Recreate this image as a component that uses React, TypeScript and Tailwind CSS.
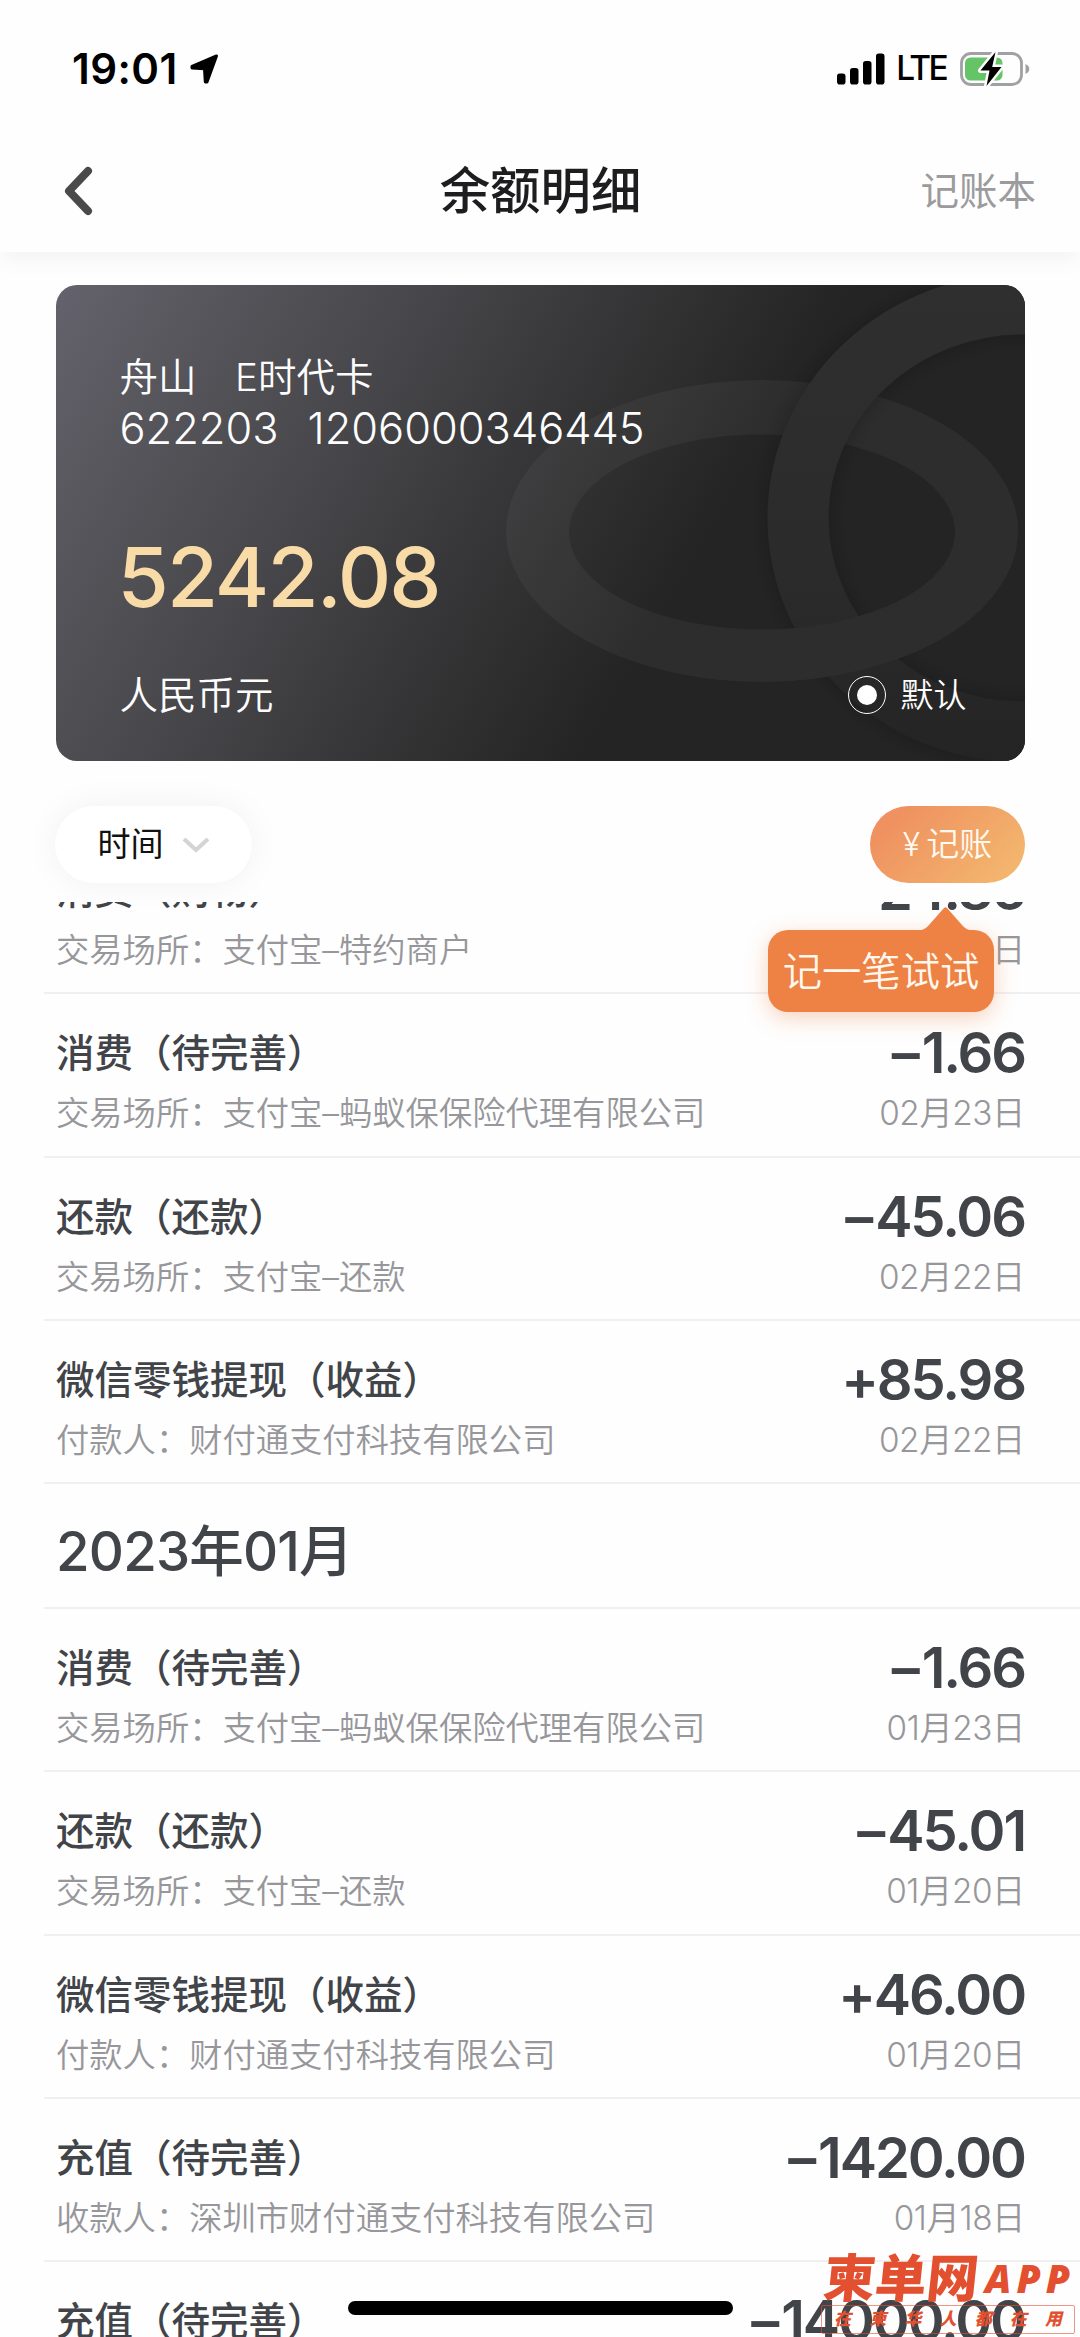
import React from 'react';
import { clsx } from 'clsx';

interface Transaction {
  title: string;
  detail: string;
  amount: string;
  date: string;
}

const FEBRUARY: Transaction[] = [
  { title: '消费（购物）', detail: '交易场所：支付宝–特约商户', amount: '–24.86', date: '02月23日' },
  { title: '消费（待完善）', detail: '交易场所：支付宝–蚂蚁保保险代理有限公司', amount: '–1.66', date: '02月23日' },
  { title: '还款（还款）', detail: '交易场所：支付宝–还款', amount: '–45.06', date: '02月22日' },
  { title: '微信零钱提现（收益）', detail: '付款人：财付通支付科技有限公司', amount: '+85.98', date: '02月22日' },
];

const JANUARY: Transaction[] = [
  { title: '消费（待完善）', detail: '交易场所：支付宝–蚂蚁保保险代理有限公司', amount: '–1.66', date: '01月23日' },
  { title: '还款（还款）', detail: '交易场所：支付宝–还款', amount: '–45.01', date: '01月20日' },
  { title: '微信零钱提现（收益）', detail: '付款人：财付通支付科技有限公司', amount: '+46.00', date: '01月20日' },
  { title: '充值（待完善）', detail: '收款人：深圳市财付通支付科技有限公司', amount: '–1420.00', date: '01月18日' },
  { title: '充值（待完善）', detail: '收款人：深圳市财付通支付科技有限公司', amount: '–14000.00', date: '01月18日' },
];

const StatusBar: React.FC = () => (
  <div className="flex h-[138px] items-center justify-between pl-[72px] pr-[50px] text-black">
    <div className="flex items-center gap-[12px]">
      <span className="text-[42px] font-semibold leading-none tracking-[0.01em]">19:01</span>
      <svg className="h-[30px] w-[29px]" viewBox="0 0 29 30">
        <path
          d="M26.500 2 2 12.500v1.500l12.500.8.8 13.200h1.700Z"
          fill="#000"
          stroke="#000"
          strokeWidth="3"
          strokeLinejoin="round"
        />
      </svg>
    </div>
    <div className="flex items-center">
      <svg className="h-[32px] w-[48px]" viewBox="0 0 48 32">
        <rect x="0" y="20.500" width="8.500" height="11" rx="2.800" />
        <rect x="13" y="15" width="8.500" height="16.500" rx="2.800" />
        <rect x="26" y="8" width="8.500" height="23.500" rx="2.800" />
        <rect x="39" y="0.500" width="8.500" height="31" rx="2.800" />
      </svg>
      <span className="ml-[11px] text-[33.500px] font-medium leading-none tracking-[-0.08em]">LTE</span>
      <svg className="ml-[14px] h-[36px] w-[70px]" viewBox="0 0 70 36">
        <rect x="1.500" y="2.500" width="60" height="31" rx="9.500" fill="none" stroke="#a1a1a3" strokeWidth="2.800" />
        <path d="M65.500 13v10c2.400-1 3.800-2.800 3.800-5s-1.400-4-3.800-5Z" fill="#a1a1a3" />
        <rect x="5" y="6.500" width="37.500" height="23" rx="5.500" fill="#65c466" />
        <path
          d="M35.500 1 20.500 19.500h9L26.500 35l15-19h-9.300Z"
          fill="#000"
          stroke="#fff"
          strokeWidth="5"
          strokeLinejoin="round"
          paintOrder="stroke"
        />
      </svg>
    </div>
  </div>
);

const NavBar: React.FC = () => (
  <div className="grid h-[114px] grid-cols-3 items-center pl-[62px] pr-[44px] pb-[8px]">
    <svg className="h-[52px] w-[32px]" viewBox="0 0 32 52">
      <path d="M26 6 7 26l19 20" fill="none" stroke="#4a4a4a" strokeWidth="8" strokeLinecap="round" strokeLinejoin="round" />
    </svg>
    <h1 className="ml-[-17px] whitespace-nowrap text-center text-[50.400px] font-medium leading-none text-[#1d1d1f]">余额明细</h1>
    <span className="text-right text-[38.500px] leading-none text-[#9b9b9d]">记账本</span>
  </div>
);

const CardRings: React.FC = () => (
  <svg className="absolute inset-0 h-full w-full" viewBox="0 0 969 476">
    <defs>
      <filter id="soft" x="-20%" y="-20%" width="140%" height="140%">
        <feGaussianBlur stdDeviation="9" />
      </filter>
      <linearGradient id="ring" gradientUnits="userSpaceOnUse" x1="0" y1="0" x2="0" y2="476">
        <stop offset="0" stopColor="#2f2f2f" />
        <stop offset="0.6" stopColor="#2b2b2b" />
        <stop offset="1" stopColor="#242424" />
      </linearGradient>
      <clipPath id="lower">
        <path d="M640 322H931V476H640Z" />
      </clipPath>
    </defs>
    <path
      d="M450 246a256 151 0 1 0 512 0a256 151 0 1 0 -512 0ZM513 247a193 97.5 0 1 0 386 0a193 97.5 0 1 0 -386 0Z"
      fill="#fff"
      fillOpacity="0.045"
      fillRule="evenodd"
    />
    <ellipse cx="967" cy="233" rx="225" ry="214" fill="none" stroke="#000" strokeOpacity="0.2" strokeWidth="66" filter="url(#soft)" />
    <ellipse cx="967" cy="233" rx="225" ry="214" fill="none" stroke="url(#ring)" strokeWidth="61" />
    {/* The flat ring passes back over the upright one at the bottom */}
    <path
      d="M450 246a256 151 0 1 0 512 0a256 151 0 1 0 -512 0ZM513 247a193 97.5 0 1 0 386 0a193 97.5 0 1 0 -386 0Z"
      fill="#2d2d2d"
      fillRule="evenodd"
      clipPath="url(#lower)"
    />
  </svg>
);

const BalanceCard: React.FC = () => (
  <section className="relative mx-auto h-[476px] w-[969px] overflow-hidden rounded-[21px] bg-[linear-gradient(120deg,#64636d_0%,#56555b_14%,#47464a_30%,#39393b_43%,#242424_64%)] text-[#fdfdfd]">
    <CardRings />
    <div className="relative flex h-full flex-col pl-[64px] pr-[58px] pt-[73px]">
      <p className="text-[38.500px] font-[350] leading-[38px] whitespace-pre">舟山　E时代卡</p>
      <p className="mt-[10px] flex gap-[29px] text-[43.400px] font-[350] leading-[44px]">
        <span>622203</span>
        <span>1206000346445</span>
      </p>
      <p className="ml-[-2px] mt-[85px] text-[83px] font-medium leading-[84px] tracking-[-0.023em] text-[#f9dba8]">5242.08</p>
      <div className="mt-[57px] flex items-center justify-between">
        <span className="text-[38.500px] font-[350] leading-[38px]">人民币元</span>
        <span className="flex items-center gap-[15px]">
          <span className="flex size-[38px] items-center justify-center rounded-full border-[1.500px] border-white">
            <span className="size-[20px] rounded-full bg-white" />
          </span>
          <span className="text-[33px] font-[350] leading-none">默认</span>
        </span>
      </div>
    </div>
  </section>
);

const BookkeepingTip: React.FC = () => (
  <div className="absolute left-[768px] top-[124px] z-20 flex h-[82px] w-[226px] items-center justify-center rounded-[20px] bg-[#ee8144] pt-[2px] shadow-[0_6px_22px_rgba(238,129,68,0.35)]">
    <svg className="absolute top-[-24px] left-[146px] h-[25px] w-[62px]" viewBox="0 0 62 25">
      <path d="M0 25c8 0 11-2 15-6L30 2q1.500-1.500 3 0l15 17c4 4 7 6 14 6Z" fill="#ee8144" />
    </svg>
    <span className="whitespace-nowrap text-[39.300px] font-[350] leading-none text-[#fff8ee]">记一笔试试</span>
  </div>
);

const FilterBar: React.FC = () => (
  <div className="relative z-10 flex h-[77px] shrink-0 items-center justify-between px-[55px]">
    <button className="flex h-[77px] w-[197px] items-center justify-center gap-[18px] rounded-full bg-white shadow-[0_0_34px_rgba(0,0,0,0.055)]">
      <span className="text-[33px] leading-none text-[#111]">时间</span>
      <svg className="h-[18px] w-[28px]" viewBox="0 0 28 18">
        <path d="M2 3l12 11L26 3" fill="none" stroke="#d4d4d6" strokeWidth="4" />
      </svg>
    </button>
    <button className="flex h-[77px] w-[155px] items-center justify-center gap-[6px] rounded-full bg-[linear-gradient(135deg,#ef9160_15%,#f3b66e_90%)] font-[350] leading-none text-[#fffaf0]">
      <span className="text-[32px]">¥</span>
      <span className="text-[33px]">记账</span>
    </button>
  </div>
);

const Amount: React.FC<{ value: string }> = ({ value }) => (
  <p className="text-[56px] font-semibold leading-[48px] tracking-[-0.037em] text-[#414449]">
    <span className={clsx(value.startsWith('–') && 'mr-[4px]')}>{value[0]}</span>
    {value.slice(1)}
  </p>
);

const TransactionRow: React.FC<{ item: Transaction; last?: boolean }> = ({ item, last }) => (
  <li
    className={clsx(
      'ml-[44px] flex h-[163.25px] justify-between pl-[12px] pr-[55px] pt-[35px]',
      !last && 'border-b-2 border-[#f0f0f1]'
    )}
  >
    <div>
      <p className="text-[38.500px] font-medium leading-[48px] text-[#414449]">{item.title}</p>
      <p className="mt-[14px] text-[33.300px] font-[350] leading-[44px] text-[#97979b]">{item.detail}</p>
    </div>
    <div className="text-right">
      <Amount value={item.amount} />
      <p className="mt-[14px] text-[33.300px] font-[350] leading-[44px] tracking-[-0.012em] text-[#97979b]">{item.date}</p>
    </div>
  </li>
);

const Watermark: React.FC = () => (
  <div className="absolute bottom-[3px] right-[5px] z-30 flex w-[254px] flex-col text-[#e35030]">
    <div className="flex items-end justify-between pl-[3px]">
      <span className="-skew-x-6 text-[51.500px] font-black leading-[54px]">柬单网</span>
      <span className="mb-[4px] font-['Open_Sans'] text-[39px] font-extrabold italic leading-[46px] tracking-[5px]">APP</span>
    </div>
    <div className="flex h-[29px] items-center justify-between rounded-[2px] border border-[#e35030]/60 px-[12px] text-[17px] font-black italic leading-none">
      {[...'在柬华人都在用'].map((char, i) => (
        <span key={i}>{char}</span>
      ))}
    </div>
  </div>
);

export default function App() {
  return (
    <div className="relative flex h-[2337px] w-[1080px] flex-col overflow-hidden bg-[#fefefe] font-['Inter','Noto_Sans_CJK_SC',sans-serif]">
      <header className="relative bg-[#fefefe] shadow-[0_6px_22px_rgba(0,0,0,0.05)]">
        <StatusBar />
        <NavBar />
      </header>
      <main className="flex min-h-0 flex-1 flex-col pt-[33px]">
        <BalanceCard />
        <div className="relative mt-[45px]">
          <FilterBar />
          <BookkeepingTip />
        </div>
        <div className="mt-[19px] min-h-0 flex-1 overflow-hidden">
          <ul className="mt-[-71px]">
            {FEBRUARY.map((item, i) => (
              <TransactionRow key={i} item={item} />
            ))}
          </ul>
          <h2 className="ml-[44px] flex h-[125px] items-center border-b-2 border-[#f0f0f1] pl-[12px] pt-[12px] text-[54.500px] font-medium tracking-[-0.015em] text-[#414449]">
            2023年01月
          </h2>
          <ul>
            {JANUARY.map((item, i) => (
              <TransactionRow key={i} item={item} last={i === JANUARY.length - 1} />
            ))}
          </ul>
        </div>
      </main>
      {/* Home indicator */}
      <div className="absolute bottom-[22px] left-[348px] h-[14px] w-[385px] rounded-full bg-black" />
      <Watermark />
    </div>
  );
}
